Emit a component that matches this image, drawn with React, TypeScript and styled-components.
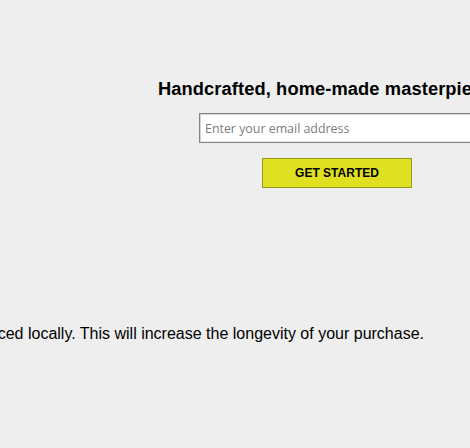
import React from "react";
import styled, { createGlobalStyle } from "styled-components";

const Global = createGlobalStyle`
  html, body {
    margin: 0;
    padding: 0;
    background: #eeeeee;
    overflow: hidden;
  }
  body {
    font-family: "Liberation Sans", Arial, sans-serif;
    color: #000;
  }
`;

const Page = styled.div`
  width: 470px;
  height: 448px;
  overflow: hidden;
  display: flex;
  flex-direction: column;
`;

const Hero = styled.section`
  width: 674px;
  padding-top: 78px;
  display: flex;
  flex-direction: column;
  align-items: center;
`;

const Title = styled.h1`
  align-self: flex-start;
  margin: 0 0 0 158px;
  font-size: 18.3px;
  font-weight: bold;
  line-height: 21px;
  letter-spacing: 0.1px;
  white-space: nowrap;
`;

const EmailInput = styled.input`
  box-sizing: border-box;
  margin-top: 14px;
  width: 276px;
  height: 30px;
  padding: 0 5px;
  background: #fff;
  border: 1px solid #858585;
  box-shadow: inset 1px 1px 0 #d4d4d4, inset -1px -1px 0 #e6e6e6;
  font-family: "Open Sans", "Liberation Sans", sans-serif;
  font-size: 12.4px;
  outline: none;
  &::placeholder {
    color: #7d7d7d;
  }
`;

const StartButton = styled.button`
  box-sizing: border-box;
  margin-top: 15px;
  width: 150px;
  height: 30px;
  background: #e0e022;
  border: 1px solid #9a9a1a;
  font-family: "Liberation Sans", Arial, sans-serif;
  font-weight: bold;
  font-size: 12px;
  color: #000;
  cursor: pointer;
`;

const Note = styled.div`
  width: 424px;
  margin-top: 137px;
  display: flex;
  justify-content: flex-end;
`;

const NoteText = styled.p`
  margin: 0;
  font-size: 16px;
  line-height: 18px;
  white-space: nowrap;
`;

export default function App() {
  return (
    <Page>
      <Global />
      <Hero>
        <Title>Handcrafted, home-made masterpieces</Title>
        <EmailInput type="email" placeholder="Enter your email address" />
        <StartButton>GET STARTED</StartButton>
      </Hero>
      <Note>
        <NoteText>
          All our products are sourced locally. This will increase the longevity of your purchase.
        </NoteText>
      </Note>
    </Page>
  );
}
